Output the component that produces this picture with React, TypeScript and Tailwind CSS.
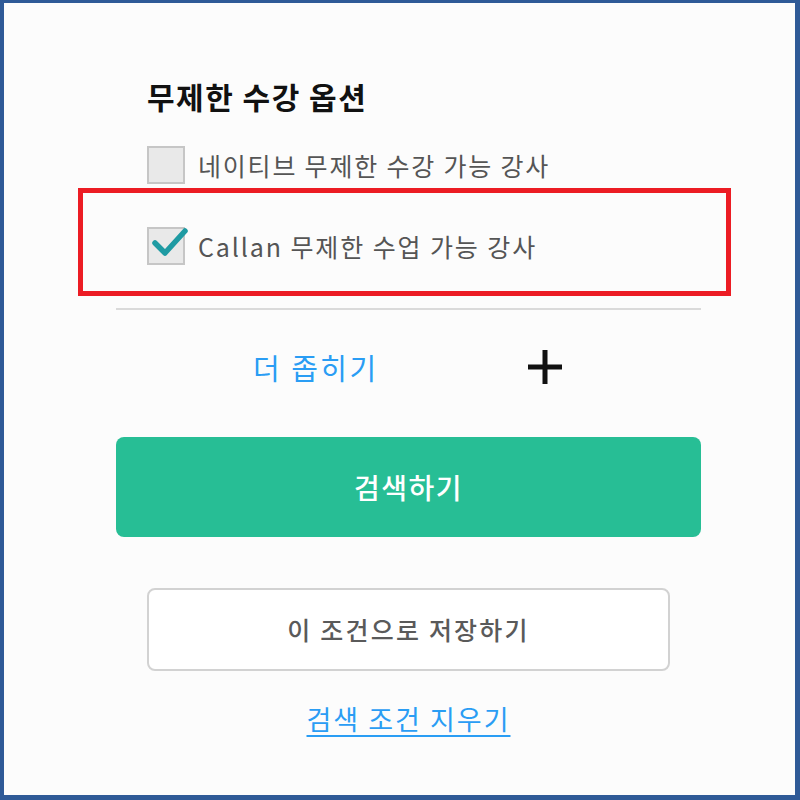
import React, { useState } from 'react';

const Checkbox = ({ checked }: { checked: boolean }) => (
  <div className="relative w-[38px] h-[38px] shrink-0 bg-[#e9e9e9] border-2 border-[#c6c6c6]">
    {checked && (
      <svg className="absolute left-[1px] top-[-10px]" width="42" height="42" viewBox="0 0 42 42">
        <path d="M5 24 L15 34 L35 12" fill="none" stroke="#1f9ba3" strokeWidth="5.5" strokeLinecap="round" strokeLinejoin="round" />
      </svg>
    )}
  </div>
);

const App: React.FC = () => {
  const [native, setNative] = useState(false);
  const [callan, setCallan] = useState(true);

  return (
    <div className="w-[800px] h-[800px] bg-[#fcfcfc] border-[#2f5a97] border-t-[3px] border-l-4 border-r-[5px] border-b-[5px] font-['Noto_Sans_CJK_KR',sans-serif]">
      <div className="ml-[112px] w-[585px] pt-[74px] flex flex-col">
        <h2 className="ml-[31px] text-[30px] leading-[38px] font-bold text-[#111] tracking-[1.5px]">무제한 수강 옵션</h2>

        {/* options */}
        <div className="mt-[31px] ml-[31px] flex items-center gap-[13px] cursor-pointer" onClick={() => setNative(!native)}>
          <Checkbox checked={native} />
          <span className="text-[25px] leading-[38px] text-[#555] tracking-[1.8px]">네이티브 무제한 수강 가능 강사</span>
        </div>

        <div
          className="mt-[4px] -ml-[38px] -mr-[30px] h-[108px] border-[5px] border-[#ec1c24] pl-[64px] flex items-center cursor-pointer"
          onClick={() => setCallan(!callan)}
        >
          <div className="flex items-center gap-[13px] mt-[8px]">
            <Checkbox checked={callan} />
            <span className="text-[25px] leading-[38px] text-[#555] tracking-[1.9px]">Callan 무제한 수업 가능 강사</span>
          </div>
        </div>

        <div className="mt-[12px] h-[2px] bg-[#dadada]" />

        {/* narrow down */}
        <div className="mt-[37px] h-[40px] flex items-center">
          <span className="ml-[137px] text-[29px] leading-[40px] text-[#2a9df4] tracking-[2.5px]">더 좁히기</span>
          <svg className="ml-[148px]" width="36" height="36" viewBox="0 0 36 36">
            <path d="M18 1 V35 M1 18 H35" stroke="#111" strokeWidth="5" />
          </svg>
        </div>

        <button className="mt-[50px] h-[100px] rounded-[8px] bg-[#27be95] text-white text-[28px] font-medium tracking-[1.5px]">
          검색하기
        </button>

        <button className="mt-[51px] mx-[31px] h-[83px] rounded-[8px] border-2 border-[#d2d2d2] bg-white text-[#5a5a5a] text-[25px] font-medium tracking-[2.2px]">
          이 조건으로 저장하기
        </button>

        <a className="mt-[30px] self-center text-[27px] leading-[36px] text-[#2a9df4] underline underline-offset-[5px] tracking-[2px] cursor-pointer">
          검색 조건 지우기
        </a>
      </div>
    </div>
  );
};

export default App;
